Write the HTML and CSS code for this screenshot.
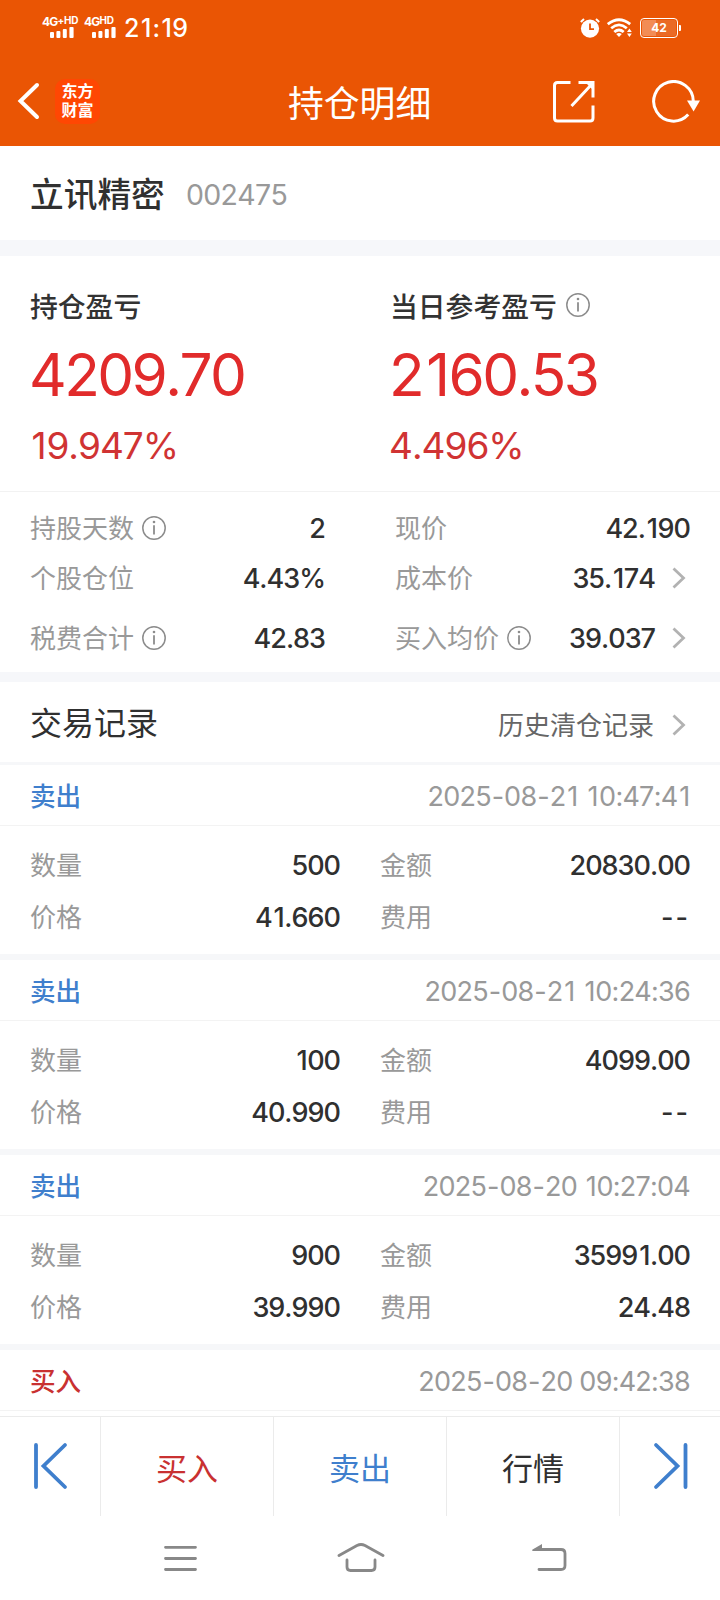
FILE: index.html
```html
<!DOCTYPE html>
<html lang="zh-CN">
<head>
<meta charset="utf-8">
<title>持仓明细</title>
<link rel="stylesheet" href="styles.css">
</head>
<body>
<svg class="defs" width="0" height="0">
  <symbol id="info" viewBox="0 0 24 24">
    <circle cx="12" cy="12" r="11.2" fill="none" stroke="#8c8c8c" stroke-width="1.5"/>
    <circle cx="12" cy="6" r="1.3" fill="#8c8c8c"/>
    <path d="M12 9.2v9.3" stroke="#8c8c8c" stroke-width="1.8"/>
  </symbol>
  <symbol id="chevron" viewBox="0 0 14 22">
    <path d="M1.5 1.5L11.5 11L1.5 20.5" fill="none" stroke="#b2b2b2" stroke-width="2.8"/>
  </symbol>
</svg>

<header class="top">
  <div class="status">
    <div class="sim sim1">
      <div class="net"><span>4G</span><small>+</small><small>HD</small></div>
      <svg class="bars" width="24" height="11" viewBox="0 0 24 11" fill="#fff"><rect y="5" width="4" height="6" rx="1"/><rect x="6.4" y="4" width="4" height="7" rx="1"/><rect x="12.8" y="2" width="4" height="9" rx="1"/><rect x="19.4" width="4.2" height="11" rx="1"/></svg>
    </div>
    <div class="sim sim2">
      <div class="net"><span>4G</span><small>HD</small></div>
      <svg class="bars" width="24" height="11" viewBox="0 0 24 11" fill="#fff"><rect y="5" width="4" height="6" rx="1"/><rect x="6.4" y="4" width="4" height="7" rx="1"/><rect x="12.8" y="2" width="4" height="9" rx="1"/><rect x="19.4" width="4.2" height="11" rx="1"/></svg>
    </div>
    <time class="clock">2<i>1</i>:<i>1</i>9</time>
    <svg class="alarm" width="20" height="20" viewBox="0 0 20 20"><circle cx="10" cy="10.6" r="9.1" fill="#fff"/><path d="M.8 4L4 1.1M19.2 4L16 1.1" stroke="#fff" stroke-width="2"/><path d="M10 5.6v5.6h4" fill="none" stroke="#ea5504" stroke-width="1.8"/></svg>
    <svg class="wifi" width="26" height="20" viewBox="0 0 26 20" fill="none" stroke="#fff" stroke-width="2.8"><path d="M.8 6.2Q12 -2.6 23.2 6.2"/><path d="M4.2 10.2Q12 3.6 19.8 10.2"/><path d="M7.3 14Q12 10 16.7 14"/><path d="M9.2 16L12 19L14.8 16Q12 14 9.2 16Z" fill="#fff" stroke="none"/><path d="M20 14l2.4-3.4L24.8 14zM20 15.6l2.4 3.4L24.8 15.6z" fill="#fff" stroke="none"/></svg>
    <div class="battery"><span>42</span></div>
  </div>
  <div class="titlebar">
    <svg class="back" width="24" height="38" viewBox="0 0 24 38"><path d="M21 3L4.5 19L21 35" fill="none" stroke="#fff" stroke-width="4" stroke-linecap="round"/></svg>
    <div class="logo"><span>东方</span><span>财富</span></div>
    <h1>持仓明细</h1>
    <svg class="share" width="44" height="44" viewBox="0 0 44 44" fill="none" stroke="#fff" stroke-width="3"><path d="M18.5 2.5H5.5Q2.5 2.5 2.5 5.5V38Q2.5 41 5.5 41H38Q41 41 41 38V25.5M26.5 2.5H41V17.5M19.5 26L40 4"/><path d="M33 2H42V11Z" fill="#fff" stroke="none"/></svg>
    <svg class="refresh" width="50" height="44" viewBox="0 0 50 44"><path d="M37.2 34.6A19.8 19.8 0 1 1 42.3 21.5" fill="none" stroke="#fff" stroke-width="3"/><path d="M36 20.5H49L42.6 31.5Z" fill="#fff"/></svg>
  </div>
</header>

<main>
  <section class="stock"><h2>立讯精密</h2><span>002475</span></section>

  <section class="profit">
    <div>
      <h3>持仓盈亏</h3>
      <p class="amount">4209.70</p>
      <p class="percent"><i>1</i>9.947%</p>
    </div>
    <div>
      <h3>当日参考盈亏<svg class="info"><use href="#info"/></svg></h3>
      <p class="amount today">2<i>1</i>60.53</p>
      <p class="percent">4.496%</p>
    </div>
  </section>

  <section class="facts">
    <dl>
      <div class="r1"><dt>持股天数<svg class="info"><use href="#info"/></svg></dt><dd>2</dd></div>
      <div class="r2"><dt>个股仓位</dt><dd>4.43%</dd></div>
      <div class="r3"><dt>税费合计<svg class="info"><use href="#info"/></svg></dt><dd>42.83</dd></div>
    </dl>
    <dl>
      <div class="r1"><dt>现价</dt><dd>42.<i>1</i>90</dd></div>
      <div class="r2"><dt>成本价</dt><dd>35.<i>1</i>74</dd><svg class="chev"><use href="#chevron"/></svg></div>
      <div class="r3"><dt>买入均价<svg class="info"><use href="#info"/></svg></dt><dd>39.037</dd><svg class="chev"><use href="#chevron"/></svg></div>
    </dl>
  </section>

  <section class="records-head"><h2>交易记录</h2><a>历史清仓记录</a><svg class="chev"><use href="#chevron"/></svg></section>

  <article class="record">
    <div class="bar"><b class="sell">卖出</b><time>2025<i class="dash">-</i>08<i class="dash">-</i>2<i>1</i> <i>1</i>0:47:4<i>1</i></time></div>
    <dl>
      <dt>数量</dt><dd>500</dd><dt>金额</dt><dd>20830.00</dd>
      <dt>价格</dt><dd>4<i>1</i>.660</dd><dt>费用</dt><dd class="none">--</dd>
    </dl>
  </article>
  <article class="record">
    <div class="bar"><b class="sell">卖出</b><time>2025<i class="dash">-</i>08<i class="dash">-</i>2<i>1</i> <i>1</i>0:24:36</time></div>
    <dl>
      <dt>数量</dt><dd><i>1</i>00</dd><dt>金额</dt><dd>4099.00</dd>
      <dt>价格</dt><dd>40.990</dd><dt>费用</dt><dd class="none">--</dd>
    </dl>
  </article>
  <article class="record">
    <div class="bar"><b class="sell">卖出</b><time>2025<i class="dash">-</i>08<i class="dash">-</i>20 <i>1</i>0:27:04</time></div>
    <dl>
      <dt>数量</dt><dd>900</dd><dt>金额</dt><dd>3599<i>1</i>.00</dd>
      <dt>价格</dt><dd>39.990</dd><dt>费用</dt><dd>24.48</dd>
    </dl>
  </article>
  <article class="record">
    <div class="bar"><b class="buy">买入</b><time>2025<i class="dash">-</i>08<i class="dash">-</i>20 09:42:38</time></div>
  </article>
</main>

<nav class="actions">
  <a><svg width="36" height="50" viewBox="0 0 36 50" fill="none" stroke="#3f7fcd" stroke-width="3.8" stroke-linecap="round"><path d="M4 4V46M33 4L11.5 25L33 46"/></svg></a>
  <a class="buy">买入</a>
  <a class="sell">卖出</a>
  <a>行情</a>
  <a class="last"><svg width="36" height="50" viewBox="0 0 36 50" fill="none" stroke="#3f7fcd" stroke-width="3.8" stroke-linecap="round"><path d="M32.5 4V46M3 4L24.5 25L3 46"/></svg></a>
</nav>

<footer class="system">
  <svg width="36" height="30" viewBox="0 0 36 30"><path d="M3.5 4.3H33.5M3.5 15.5H33.5M3.5 26.5H33.5" stroke="#888" stroke-width="2.8" stroke-linecap="round"/></svg>
  <svg width="48" height="32" viewBox="0 0 48 32" fill="none" stroke="#888" stroke-width="2.8" stroke-linecap="round" stroke-linejoin="round"><path d="M2 13.5L20 3.5Q24 1.5 28 3.5L46 13.5M10 18V25Q10 28.5 13.5 28.5H34.5Q38 28.5 38 25V18"/></svg>
  <svg width="36" height="30" viewBox="0 0 36 30" fill="none" stroke="#888" stroke-width="2.8" stroke-linecap="round"><path d="M4 6.5H29Q33 6.5 33 10.5V22.5Q33 26.5 29 26.5H7"/><path d="M.2 6.8L10 1V7.9H.4Z" fill="#888" stroke="none"/></svg>
</footer>
</body>
</html>
```
FILE: styles.css
```css
* { box-sizing: border-box; margin: 0; padding: 0; }

body {
  width: 720px;
  height: 1600px;
  overflow: hidden;
  background: #fff;
  color: #303030;
  font-family: "Inter", "Noto Sans CJK SC", sans-serif;
  font-size: 26px;
  line-height: 40px;
  font-kerning: none;
}

.defs { position: absolute; }
svg { flex: none; display: block; }
h1, h2, h3 { font-weight: 400; }

/* extra side bearing for the narrow figure one */
i { padding: 0 .05em 0 .07em; font-style: normal; }
i:last-child { padding-right: .02em; }
i.dash { padding: 0 .03em; }

/* header */
.top { height: 146px; background: #ea5504; color: #fff; }

.status { display: flex; height: 56px; padding: 16px 40px 0 42px; }
.sim { width: 42px; }
.sim2 { width: 40px; }
.net { display: flex; height: 11px; line-height: 12px; font-size: 12px; font-weight: 700; letter-spacing: -.8px; }
.net small { font-size: 10px; line-height: 9px; letter-spacing: -.3px; }
.bars { margin-left: 8px; }
.clock { width: 97px; height: 24px; line-height: 25px; font-size: 25px; font-weight: 500; letter-spacing: -.2px; }
.alarm { margin: 2px 7px 0 359px; }
.wifi { margin: 2px 7px 0 0; }
.battery {
  position: relative; width: 38px; height: 20px; margin-top: 2px;
  border: 1.5px solid #fff; border-radius: 4px;
  background: linear-gradient(90deg, #f28c55 0 42%, #ea6a26 42%) content-box;
  padding: 1px;
  font-size: 12px; font-weight: 700; line-height: 16px; text-align: center;
}
.battery::after { content: ""; position: absolute; right: -4px; top: 6px; width: 2px; height: 6px; background: #fff; border-radius: 0 1px 1px 0; }

.titlebar { display: flex; align-items: center; height: 90px; padding: 0 16px; }
.logo {
  display: flex; flex-direction: column; align-items: center;
  width: 45px; height: 45px; margin-left: 15px; padding-top: 2px;
  border-radius: 10px; background: #ff4703;
  font-family: "Noto Sans CJK SC", sans-serif;
  font-size: 16px; font-weight: 700; line-height: 19px;
}
.titlebar h1 { width: 144px; margin: 6px 0 0 188px; font-size: 35.8px; line-height: 44px; white-space: nowrap; }
.share { margin: 1px 0 0 120px; }
.refresh { margin: 1px 0 0 55px; }

/* stock heading and totals */
main { height: 1270px; overflow: hidden; }
.stock { display: flex; align-items: center; height: 110px; padding: 3px 30px 0; border-bottom: 16px solid #f6f7fa; }
.stock h2 { width: 156px; font-size: 33.7px; font-weight: 500; }
.stock span { margin-top: 1px; font-size: 28.5px; color: #999; letter-spacing: -.7px; }

.profit { display: grid; grid-template-columns: 360px 360px; height: 236px; padding-top: 30px; border-bottom: 1px solid #f2f2f2; }
.profit > div { padding-left: 30px; }
.profit h3 { display: flex; align-items: center; height: 40px; padding-top: 1px; font-size: 27.8px; font-weight: 500; color: #333; }
.profit h3 .info { margin: -3px 0 0 9px; }
.amount { height: 60px; margin: 19px 0 0 -1px; line-height: 60px; font-size: 58.5px; color: #e12b2b; letter-spacing: -2.6px; }
.percent { height: 40px; margin: 21px 0 0 -1px; font-size: 37px; color: #d03333; letter-spacing: -1px; }
.info { width: 24px; height: 24px; margin: -2px 0 0 8px; }

/* position facts */
.facts { display: grid; grid-template-columns: 354px 366px; height: 190px; padding-top: 17px; border-bottom: 10px solid #f6f7fa; }
.facts dl { padding: 0 29px 0 30px; }
.facts dl + dl { padding: 0 30px 0 41px; }
.facts dl > div { display: flex; align-items: center; height: 40px; }
.facts .r2 { margin-top: 10px; }
.facts .r3 { margin-top: 20px; }
dt { display: flex; align-items: center; color: #999; }
dd { margin-left: auto; font-size: 27px; font-weight: 500; color: #303030; letter-spacing: -1px; }
.chev { width: 14px; height: 22px; margin: -3px 4px 0 17px; }

.records-head { display: flex; align-items: center; height: 83px; padding: 4px 31px 0 30px; border-bottom: 3px solid #f6f7f9; }
.records-head h2 { font-size: 32px; }
.records-head a { margin: 3px 0 0 auto; color: #666; }
.records-head .chev { margin: 1px 3px 0 18px; }

/* trade records */
.record { height: 195px; border-bottom: 6px solid #f6f7f9; }
.bar { display: flex; align-items: center; justify-content: space-between; height: 61px; padding: 4px 30px 0 30px; border-bottom: 1px solid #f3f3f3; }
.bar b { font-size: 25.6px; font-weight: 500; }
.bar time { font-size: 27px; color: #999; letter-spacing: -.75px; }
.record dl { display: grid; grid-template-columns: 70px 240px 99px 251px; grid-auto-rows: 40px; row-gap: 12px; padding: 20px 30px 0 30px; }
.record dt:nth-of-type(even) { padding-left: 40px; }
.none { letter-spacing: 2px; }
.sell { color: #3f7fcd; }
.buy { color: #c93131; }

/* bottom bars */
.actions { display: grid; grid-template-columns: 100px 173px 173px 173px 101px; height: 100px; border-top: 1px solid #ebebeb; font-size: 31px; }
.actions a { display: flex; align-items: center; justify-content: center; padding-top: 4px; }
.actions a + a { border-left: 1px solid #ebebeb; }
.actions svg { margin: -6px 0 0 -1px; }
.actions .last svg { margin-left: 2px; }
.system { display: grid; grid-template-columns: 36px 48px 36px; justify-content: space-between; align-items: center; height: 84px; padding: 0 152px 0 162px; }
.system svg:nth-child(2) { margin-left: -4.5px; }
```
